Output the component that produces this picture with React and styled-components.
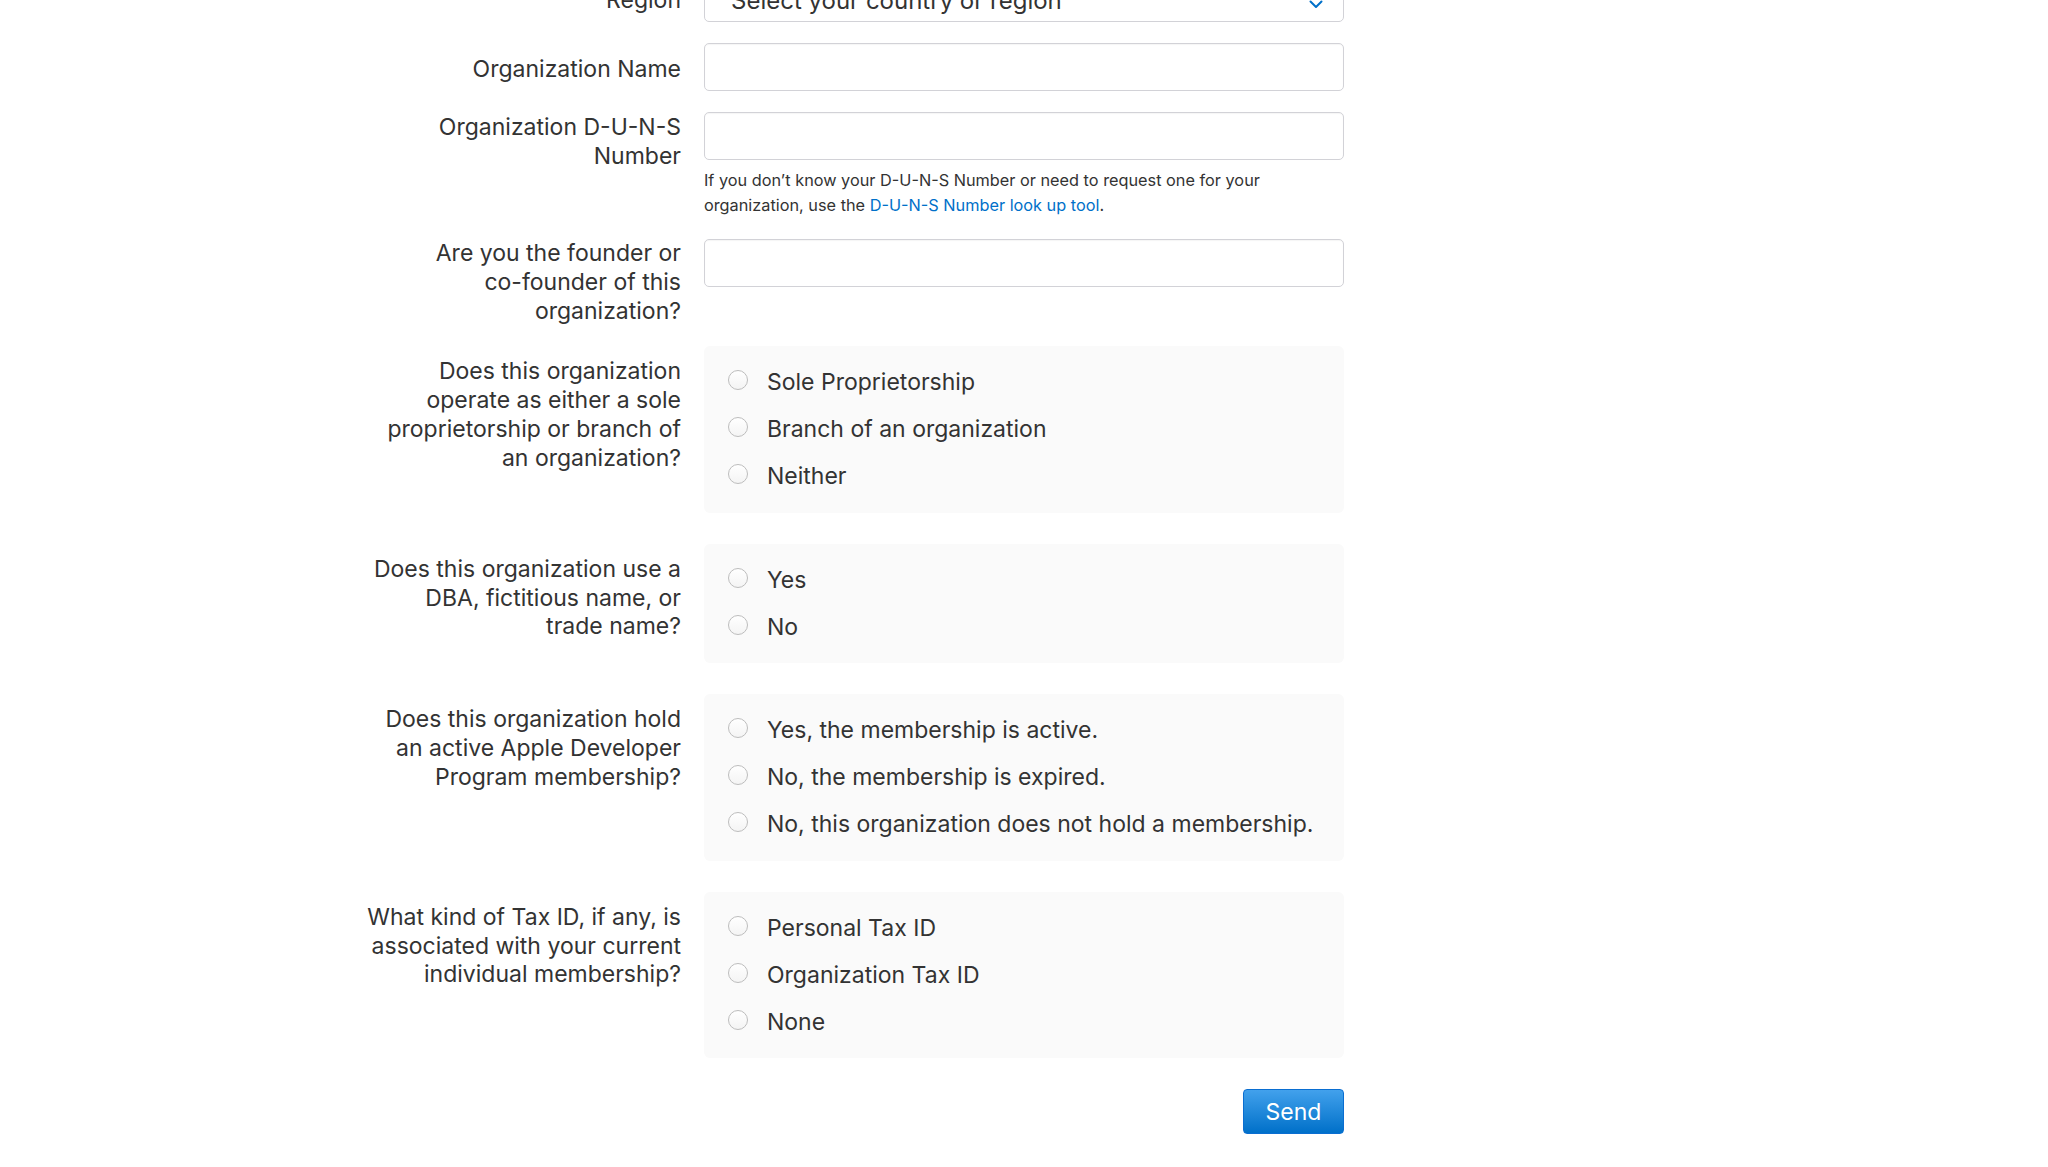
import React from "react";
import styled, { createGlobalStyle } from "styled-components";

const GlobalStyle = createGlobalStyle`
  html, body {
    margin: 0;
    padding: 0;
    background: #ffffff;
  }
  body {
    font-family: Inter, "Noto Sans", "Liberation Sans", sans-serif;
    color: #333333;
    overflow: hidden;
  }
`;

const questions = [
  {
    label: ["Does this organization", "operate as either a sole", "proprietorship or branch of", "an organization?"],
    options: ["Sole Proprietorship", "Branch of an organization", "Neither"],
  },
  {
    label: ["Does this organization use a", "DBA, fictitious name, or", "trade name?"],
    options: ["Yes", "No"],
  },
  {
    label: ["Does this organization hold", "an active Apple Developer", "Program membership?"],
    options: [
      "Yes, the membership is active.",
      "No, the membership is expired.",
      "No, this organization does not hold a membership.",
    ],
  },
  {
    label: ["What kind of Tax ID, if any, is", "associated with your current", "individual membership?"],
    options: ["Personal Tax ID", "Organization Tax ID", "None"],
  },
];

const Lines = ({ lines }) =>
  lines.map((l, i) => (
    <React.Fragment key={i}>
      {l}
      {i < lines.length - 1 && <br />}
    </React.Fragment>
  ));

const App = () => {
  return (
    <>
      <GlobalStyle />
      <Form>
        <Row>
          <Label $top={12}>Region</Label>
          <SelectBox>
            <SelectText>Select your country or region</SelectText>
            <Chevron viewBox="0 0 14 9">
              <path d="M1.5 1.5 L7 7 L12.5 1.5" fill="none" stroke="#0070c9" strokeWidth="2" strokeLinecap="round" strokeLinejoin="round" />
            </Chevron>
          </SelectBox>
        </Row>

        <Row>
          <Label $top={12}>Organization Name</Label>
          <TextInput type="text" />
        </Row>

        <Row>
          <Label $top={1}>
            Organization D-U-N-S
            <br />
            Number
          </Label>
          <Field>
            <TextInput type="text" />
            <Help>
              If you don’t know your D-U-N-S Number or need to request one for your
              <br />
              organization, use the <HelpLink href="#">D-U-N-S Number look up tool</HelpLink>.
            </Help>
          </Field>
        </Row>

        <Row>
          <Label $top={0}>
            Are you the founder or
            <br />
            co-founder of this
            <br />
            organization?
          </Label>
          <TextInput type="text" />
        </Row>

        {questions.map((q, qi) => (
          <Row key={qi} $gap={31}>
            <Label $top={11}>
              <Lines lines={q.label} />
            </Label>
            <RadioBox>
              {q.options.map((o) => (
                <RadioItem key={o}>
                  <RadioCircle type="radio" name={`q${qi}`} />
                  <RadioText>{o}</RadioText>
                </RadioItem>
              ))}
            </RadioBox>
          </Row>
        ))}

        <Row>
          <div />
          <Actions>
            <SendButton type="button">Send</SendButton>
          </Actions>
        </Row>
      </Form>
    </>
  );
};

export default App;

const Form = styled.form`
  margin-top: -26px;
  padding-left: 361px;
  width: 983px;
`;

const Row = styled.div`
  display: grid;
  grid-template-columns: 320px 640px;
  column-gap: 23px;
  align-items: start;
  margin-bottom: ${(p) => p.$gap || 21}px;
`;

const Label = styled.label`
  display: block;
  text-align: right;
  font-size: 23px;
  line-height: 28.75px;
  color: #333333;
  white-space: nowrap;
  padding-top: ${(p) => p.$top}px;
`;

const Field = styled.div`
  display: flex;
  flex-direction: column;
`;

const TextInput = styled.input`
  box-sizing: border-box;
  width: 640px;
  height: 48px;
  border: 1px solid #d2d2d7;
  border-radius: 5px;
  background: #ffffff;
  box-shadow: inset 0 1px 1px rgba(0, 0, 0, 0.04);
  margin: 0;
  padding: 0 24px;
  font: inherit;
  font-size: 23px;
  &:focus {
    outline: none;
    border-color: #0070c9;
  }
`;

const SelectBox = styled.div`
  box-sizing: border-box;
  width: 640px;
  height: 48px;
  border: 1px solid #d2d2d7;
  border-radius: 5px;
  display: flex;
  align-items: center;
  padding: 4px 20px 0 26px;
`;

const SelectText = styled.span`
  flex: 1;
  font-size: 24px;
  color: #333333;
`;

const Chevron = styled.svg`
  width: 14px;
  height: 9px;
  margin-top: 8px;
`;

const Help = styled.p`
  margin: 8px 0 0;
  font-size: 16.3px;
  line-height: 25px;
  color: #333333;
`;

const HelpLink = styled.a`
  color: #0070c9;
  text-decoration: none;
`;

const RadioBox = styled.div`
  background: #fafafa;
  border-radius: 6px;
  padding: 12.5px 24px 13px;
  display: flex;
  flex-direction: column;
`;

const RadioItem = styled.label`
  display: flex;
  align-items: center;
  height: 47px;
  gap: 19px;
  cursor: pointer;
`;

const RadioCircle = styled.input`
  appearance: none;
  box-sizing: border-box;
  margin: -4px 0 0;
  width: 20px;
  height: 20px;
  border-radius: 50%;
  border: 1px solid #bdbdbd;
  background: linear-gradient(#ffffff, #f4f4f4);
  flex-shrink: 0;
`;

const RadioText = styled.span`
  font-size: 23px;
  color: #333333;
`;

const Actions = styled.div`
  display: flex;
  justify-content: flex-end;
`;

const SendButton = styled.button`
  box-sizing: border-box;
  height: 45px;
  min-width: 101px;
  padding: 0 21px;
  border: 1px solid #0a6ed1;
  border-radius: 4px;
  background: linear-gradient(#42a1ec, #0070c9);
  color: #ffffff;
  font-family: inherit;
  font-size: 23px;
  cursor: pointer;
`;
